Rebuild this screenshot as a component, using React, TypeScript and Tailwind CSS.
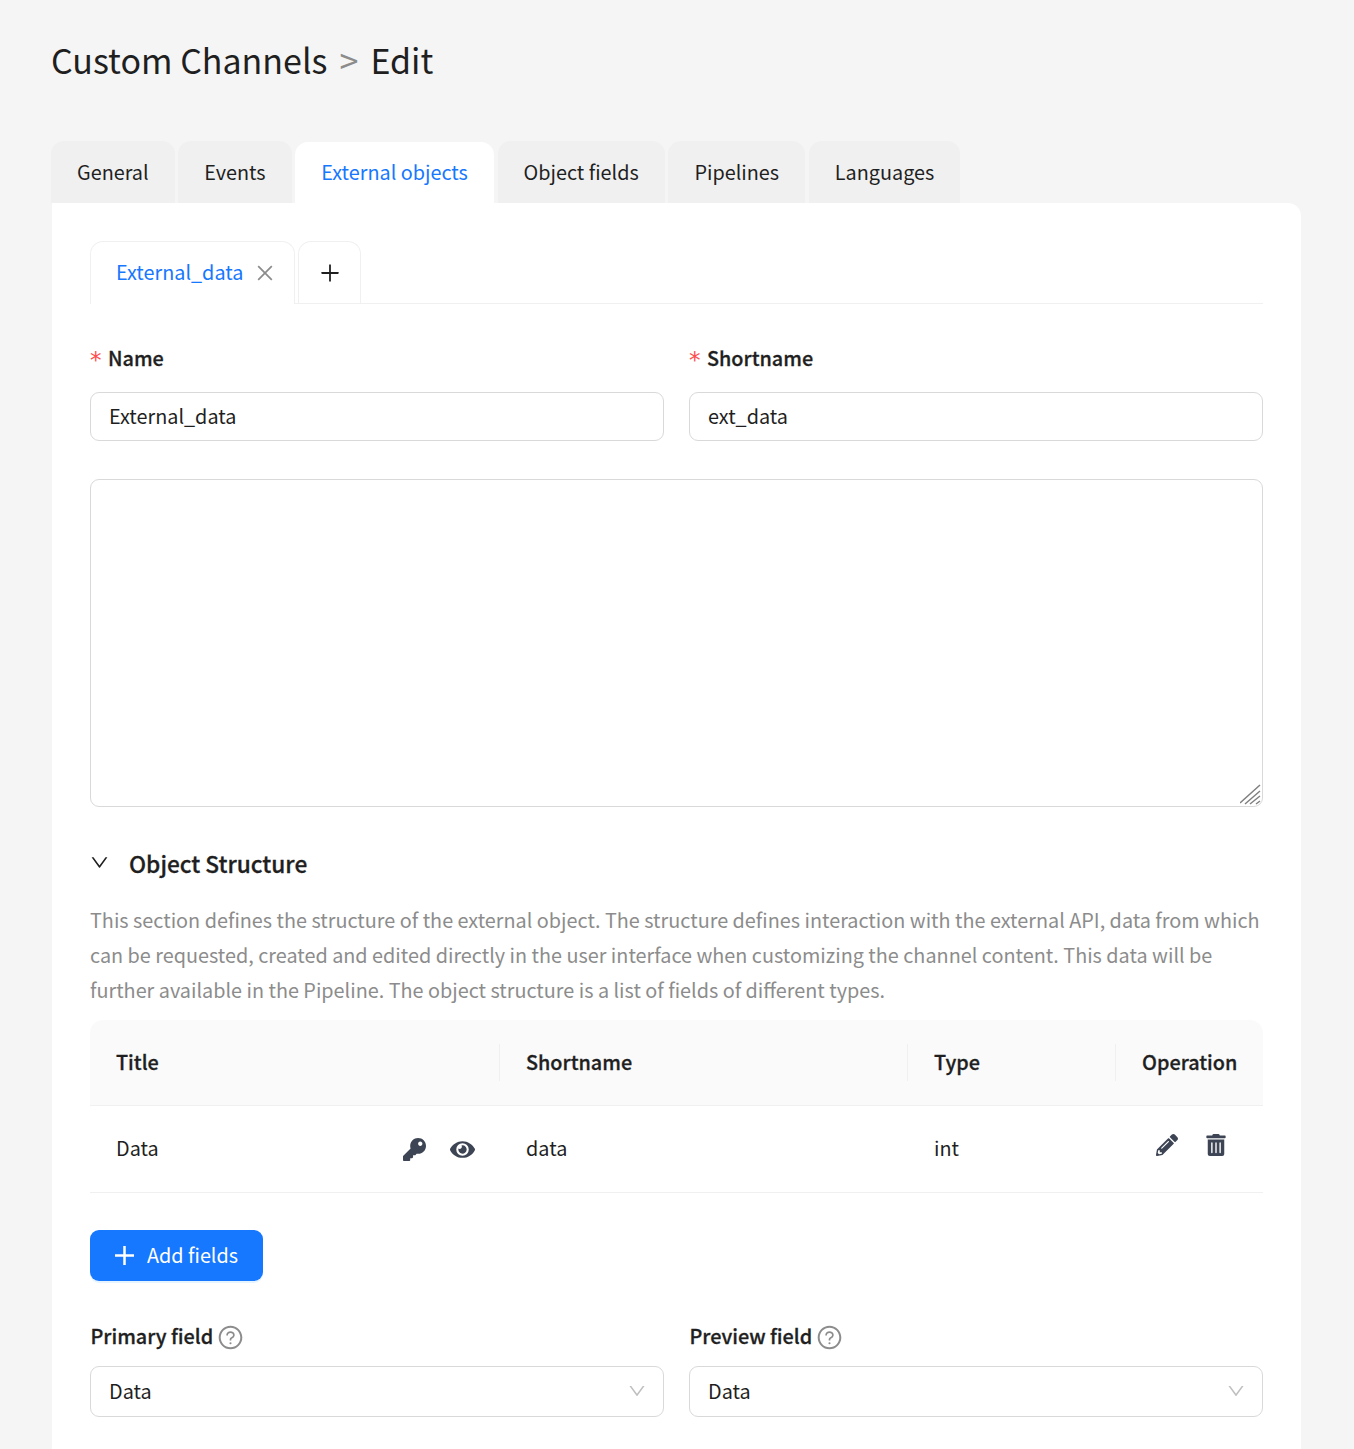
import { AiOutlineClose, AiOutlineDown, AiOutlinePlus, AiOutlineQuestionCircle } from 'react-icons/ai';
import { FaEye, FaKey, FaPencilAlt, FaTrashAlt } from 'react-icons/fa';

const tabs = ['General', 'Events', 'External objects', 'Object fields', 'Pipelines', 'Languages'];

function Tab({ label }: { label: string }) {
  const active = label === 'External objects';
  return (
    <div
      className={
        active
          ? 'flex h-[61px] items-center rounded-t-[13px] bg-white px-[26px] pb-[2px] text-[#1677ff]'
          : 'flex h-[62px] items-center rounded-t-[13px] bg-[#f0f0f0] px-[26px] pb-[1px]'
      }
    >
      {label}
    </div>
  );
}

function FieldLabel({ children }: { children: string }) {
  return (
    <div className="flex h-[48px] items-start">
      <span className="mt-[2px] mr-[7px] w-[11px] font-['DejaVu_Sans',sans-serif] text-[23px] leading-[28px] text-[#ff4d4f]">*</span>
      <span className="-mt-[2px] leading-[32px] font-medium [-webkit-text-stroke:0.3px]">{children}</span>
    </div>
  );
}

function TextInput({ value }: { value: string }) {
  return (
    <div className="flex h-[49px] items-center rounded-[9px] border border-[#d9d9d9] bg-white px-[18px] pb-[2px]">{value}</div>
  );
}

function SelectField({ label }: { label: string }) {
  return (
    <div>
      <div className="mb-[13px] flex h-[32px] items-center pl-[0.5px] font-medium [-webkit-text-stroke:0.3px]">
        <span className="-mt-[2px]">{label}</span>
        <AiOutlineQuestionCircle className="ml-[4px] text-[27px] font-normal text-[#8c8c8c] [-webkit-text-stroke:0]" />
      </div>
      <div className="flex h-[51px] items-center justify-between rounded-[9px] border border-[#d9d9d9] bg-white pr-[16px] pb-[1px] pl-[18px]">
        Data
        <AiOutlineDown className="text-[20px] text-[#bfbfbf]" />
      </div>
    </div>
  );
}

export default function App() {
  return (
    <div className="h-[1449px] overflow-hidden bg-[#f5f5f5] pt-[35px] pr-[53px] pl-[51px] font-['Noto_Sans_CJK_SC',sans-serif] text-[19.82px] leading-[32px] text-[#1f1f1f]">
      <h1 className="flex h-[50px] items-center pb-[1px] text-[34px] leading-[50px]">
        Custom Channels
        <span className="mx-[12px] text-[#8c8c8c]">&gt;</span>
        Edit
      </h1>

      <div className="mt-[56px] flex items-end gap-[3.7px]">
        {tabs.map((tab) => (
          <Tab key={tab} label={tab} />
        ))}
      </div>

      <div className="ml-px h-[1300px] rounded-tr-[13px] bg-white px-[38px] pt-[38px]">
        <div className="flex h-[63px] items-stretch gap-[3px] border-b border-[#f0f0f0]">
          <div className="-mb-px flex items-center rounded-t-[13px] border border-b-0 border-[#f0f0f0] bg-white pr-[18px] pl-[25px] text-[#1677ff]">
            <span className="pb-[2px]">External_data</span>
            <AiOutlineClose className="ml-[11px] text-[22px] text-[#8c8c8c]" />
          </div>
          <div className="flex w-[63px] items-center justify-center rounded-t-[13px] border border-b-0 border-[#f0f0f0]">
            <AiOutlinePlus className="text-[24px]" />
          </div>
        </div>

        <div className="mt-[40px] grid grid-cols-2 gap-x-[25px]">
          <div>
            <FieldLabel>Name</FieldLabel>
            <TextInput value="External_data" />
          </div>
          <div>
            <FieldLabel>Shortname</FieldLabel>
            <TextInput value="ext_data" />
          </div>
        </div>

        <div className="relative mt-[38px] h-[328px] rounded-[9px] border border-[#d9d9d9]">
          <svg className="absolute right-0 bottom-0 h-[22px] w-[22px]" viewBox="0 0 22 22" fill="none" stroke="#808080" strokeWidth="1.5">
            <path d="M0 19 20 1M5 20 20 7M10 20 20 12M16 20l4-3" />
          </svg>
        </div>

        <div className="mt-[40px] flex h-[34px] items-center">
          <AiOutlineDown className="mr-[19px] -mt-[3px] -ml-px text-[21px]" />
          <span className="text-[22.7px] leading-[34px] font-medium [-webkit-text-stroke:0.3px]">Object Structure</span>
        </div>

        <p className="mt-[21px] leading-[35px] text-[#8c8c8c]">
          This section defines the structure of the external object. The structure defines interaction with the external API, data from which can be requested, created and edited directly in the user interface when customizing the channel content. This data will be further available in the Pipeline. The object structure is a list of fields of different types.
        </p>

        <div className="mt-[13px]">
          <div className="grid h-[86px] grid-cols-[410px_408px_208px_147px] items-center rounded-t-[13px] border-b border-[#f0f0f0] bg-[#fafafa] font-medium [-webkit-text-stroke:0.3px]">
            <div className="flex h-[37px] items-center border-r border-[#f0f0f0] pb-[1px] pl-[26px]">Title</div>
            <div className="flex h-[37px] items-center border-r border-[#f0f0f0] pb-[1px] pl-[26px]">Shortname</div>
            <div className="flex h-[37px] items-center border-r border-[#f0f0f0] pb-[1px] pl-[26px]">Type</div>
            <div className="pb-[1px] pl-[26px]">Operation</div>
          </div>
          <div className="grid h-[87px] grid-cols-[410px_408px_208px_147px] items-center border-b border-[#f0f0f0]">
            <div className="flex items-center justify-between pr-[25px] pl-[26px]">
              <span className="pb-[2px]">Data</span>
              <div className="flex items-center gap-[24px] text-[#3d4454]">
                <FaKey className="text-[23px]" />
                <FaEye className="text-[25px]" />
              </div>
            </div>
            <div className="pb-[2px] pl-[26px]">data</div>
            <div className="pb-[2px] pl-[26px]">int</div>
            <div className="-mt-[8px] flex items-center gap-[27px] pl-[40px] text-[#3d4454]">
              <FaPencilAlt className="text-[22px]" />
              <FaTrashAlt className="text-[22px]" />
            </div>
          </div>
        </div>

        <button className="mt-[37px] flex h-[51px] w-[173px] items-center justify-center rounded-[9px] bg-[#1677ff] pb-[1px] text-white shadow-[0_2px_0_rgba(5,145,255,0.1)]">
          <svg className="mt-[1px] mr-[13px] h-[19px] w-[19px]" viewBox="0 0 19 19" fill="none" stroke="currentColor" strokeWidth="2.5">
            <path d="M9.5 0v19M0 9.5h19" />
          </svg>
          Add fields
        </button>

        <div className="mt-[40px] grid grid-cols-2 gap-x-[25px]">
          <SelectField label="Primary field" />
          <SelectField label="Preview field" />
        </div>
      </div>
    </div>
  );
}
